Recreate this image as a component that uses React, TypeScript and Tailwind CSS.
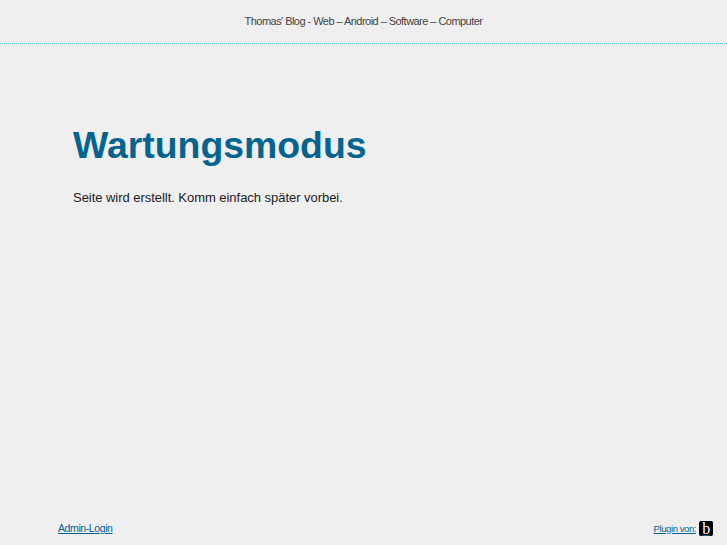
import React from 'react';

const sans = { fontFamily: '"Liberation Sans", Arial, sans-serif' };

export default function App() {
  return (
    <div className="h-[545px] flex flex-col bg-[#efefef]" style={sans}>
      {/* Header */}
      <header className="h-[43px] shrink-0 flex items-center justify-center text-[11px] text-[#444444] tracking-[-0.54px]">
        Thomas' Blog - Web – Android – Software – Computer
      </header>
      {/* dotted rule */}
      <div className="h-px shrink-0 bg-[repeating-linear-gradient(90deg,#5cc0e4_0px,#5cc0e4_1px,#cdeaf4_1px,#cdeaf4_2px)]" />

      <main className="flex-1 pl-[73px] pt-[78px]">
        <h1 className="text-[37.4px] leading-[46px] font-bold text-[#036490]">Wartungsmodus</h1>
        <p className="mt-[22px] text-[13px] leading-[16px] text-[#222222] tracking-[-0.04px]">
          Seite wird erstellt. Komm einfach später vorbei.
        </p>
      </main>

      {/* Footer */}
      <footer className="h-[34px] shrink-0 flex items-start justify-between pl-[58px] pr-[14px] pt-[10px]">
        <a href="#" className="text-[10.5px] leading-[14px] text-[#036490] underline tracking-[-0.4px]">Admin-Login</a>
        <a href="#" className="flex items-center gap-[3px] text-[9.5px] leading-[14px] text-[#036490] underline tracking-[-0.42px]">
          Plugin von:
          <span className="w-[14px] h-[15px] rounded-[2px] bg-black text-white flex items-center justify-center text-[16px] leading-none" style={{ fontFamily: '"Liberation Serif", serif', textDecoration: 'none' }}>b</span>
        </a>
      </footer>
    </div>
  );
}
